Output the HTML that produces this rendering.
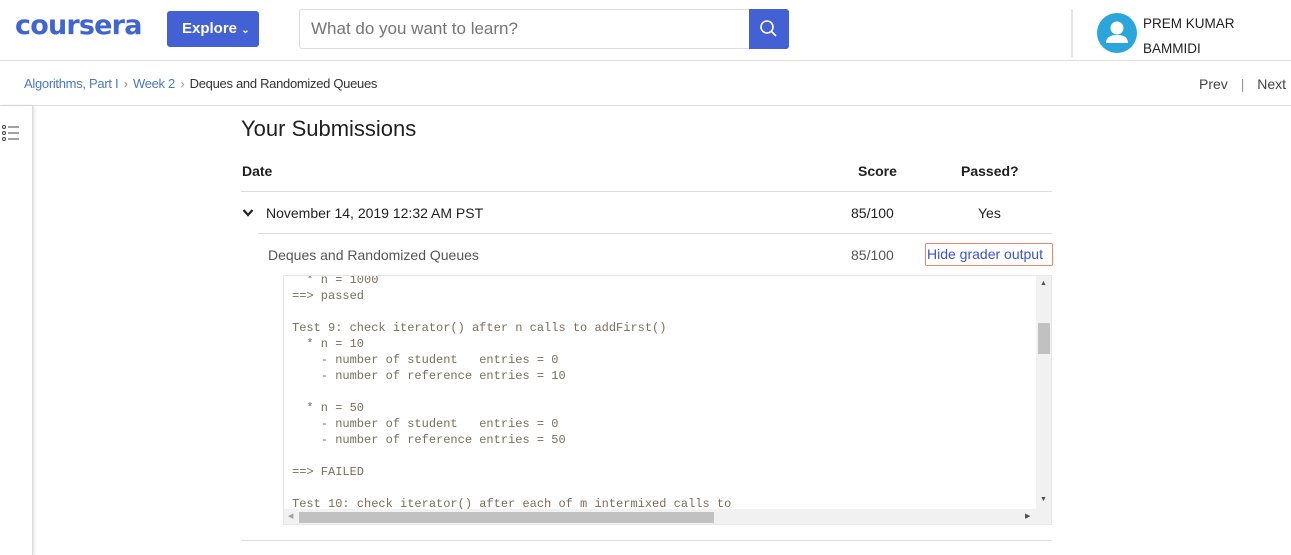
<!DOCTYPE html>
<html><head><meta charset="utf-8"><style>
*{margin:0;padding:0;box-sizing:border-box}
body{width:1291px;height:555px;overflow:hidden;background:#fff;font-family:"Liberation Sans",sans-serif;color:#1f1f1f;position:relative}
.a{position:absolute;white-space:nowrap}
.mono{font-family:"Liberation Mono",monospace;font-size:12px;color:#7a6e62;line-height:16px;white-space:pre}
</style></head><body>
<div class="a" style="left:15px;top:10px;font-size:27px;font-weight:bold;color:#4064d2;letter-spacing:-0.8px;font-family:'DejaVu Sans',sans-serif">coursera</div>
<div class="a" style="left:167px;top:11px;width:92px;height:36px;background:#4360d4;border-radius:3px;color:#fff;font-size:15px;font-weight:bold;line-height:36px;padding-left:15px">Explore <span style="font-size:10px">&#8964;</span></div>
<div class="a" style="left:299px;top:9px;width:451px;height:40px;border:1px solid #dcdcdc;border-radius:3px 0 0 3px;font-size:17px;color:#757575;line-height:38px;padding-left:11px">What do you want to learn?</div>
<div class="a" style="left:749px;top:9px;width:40px;height:40px;background:#4360d4;border-radius:0 3px 3px 0">
<svg width="40" height="40"><circle cx="18" cy="18" r="6" fill="none" stroke="#fff" stroke-width="1.6"/><line x1="22.5" y1="22.5" x2="27" y2="27" stroke="#fff" stroke-width="1.8"/></svg></div>
<div class="a" style="left:1071px;top:9px;width:2px;height:48px;background:#e5e5e5"></div>
<svg class="a" style="left:1097px;top:13px" width="40" height="40"><circle cx="20" cy="20" r="20" fill="#2aa6dc"/><circle cx="20" cy="15" r="6.5" fill="#fff"/><path d="M9 30 Q9 22 20 22 Q31 22 31 30 Z" fill="#fff"/></svg>
<div class="a" style="left:1143px;top:11px;font-size:13.5px;line-height:25px;color:#222">PREM KUMAR<br>BAMMIDI</div>
<div class="a" style="left:0;top:60px;width:1291px;height:1px;background:#e0e0e0"></div>
<div class="a" style="left:24px;top:76px;font-size:13px;color:#4a78c2;letter-spacing:-0.3px">Algorithms, Part I <span style="color:#999;margin:0 2px">&#8250;</span> Week 2 <span style="color:#999;margin:0 2px">&#8250;</span> <span style="color:#333">Deques and Randomized Queues</span></div>
<div class="a" style="left:1199px;top:76px;font-size:14px;color:#444">Prev <span style="color:#999;margin:0 9px">|</span> Next</div>
<div class="a" style="left:0;top:105px;width:1291px;height:1px;background:#e0e0e0"></div>
<div class="a" style="left:0;top:106px;width:33px;height:449px;background:#fff;border-right:1px solid #ddd;box-shadow:1px 0 3px rgba(0,0,0,.15)"></div>
<svg class="a" style="left:1px;top:124px" width="20" height="18"><g fill="none" stroke="#444" stroke-width="1"><circle cx="3" cy="3" r="1.5"/><circle cx="3" cy="9" r="1.5"/><circle cx="3" cy="15" r="1.5"/><line x1="7" y1="3" x2="18" y2="3"/><line x1="7" y1="9" x2="18" y2="9"/><line x1="7" y1="15" x2="18" y2="15"/></g></svg>
<div class="a" style="left:241px;top:116px;font-size:22px;color:#1f1f1f">Your Submissions</div>
<div class="a" style="left:242px;top:163px;font-size:14px;font-weight:bold">Date</div>
<div class="a" style="left:858px;top:163px;font-size:14px;font-weight:bold">Score</div>
<div class="a" style="left:961px;top:163px;font-size:14px;font-weight:bold">Passed?</div>
<div class="a" style="left:241px;top:191px;width:811px;height:1px;background:#ddd"></div>
<svg class="a" style="left:242px;top:208px" width="12" height="10"><path d="M1.5 2 L6 7 L10.5 2" fill="none" stroke="#222" stroke-width="2.2"/></svg>
<div class="a" style="left:266px;top:205px;font-size:14px">November 14, 2019 12:32 AM PST</div>
<div class="a" style="left:851px;top:205px;font-size:14px">85/100</div>
<div class="a" style="left:978px;top:205px;font-size:14px">Yes</div>
<div class="a" style="left:258px;top:233px;width:794px;height:1px;background:#ddd"></div>
<div class="a" style="left:268px;top:247px;font-size:14px;color:#555">Deques and Randomized Queues</div>
<div class="a" style="left:851px;top:247px;font-size:14px;color:#555">85/100</div>
<div class="a" style="left:925px;top:243px;width:128px;height:23px;border:1.5px solid #f2846a;border-radius:2px;font-size:14px;color:#3a52d8;line-height:21px;padding-left:1px">Hide grader output</div>
<div class="a" style="left:283px;top:275px;width:769px;height:250px;border:1px solid #e6e6e6;background:#fff;overflow:hidden">
<div class="mono" style="position:absolute;left:8px;top:-4px">  * n = 1000
==&gt; passed

Test 9: check iterator() after n calls to addFirst()
  * n = 10
    - number of student   entries = 0
    - number of reference entries = 10

  * n = 50
    - number of student   entries = 0
    - number of reference entries = 50

==&gt; FAILED

Test 10: check iterator() after each of m intermixed calls to</div>
<div style="position:absolute;left:752px;top:0;width:16px;height:233px;background:#f1f1f1"></div>
<div style="position:absolute;left:754px;top:47px;width:12px;height:31px;background:#c1c1c1"></div>
<div style="position:absolute;left:756px;top:4px;font-size:7px;color:#505050">&#9650;</div>
<div style="position:absolute;left:756px;top:220px;font-size:7px;color:#505050">&#9660;</div>
<div style="position:absolute;left:0;top:233px;width:768px;height:16px;background:#f1f1f1"></div>
<div style="position:absolute;left:15px;top:236px;width:415px;height:11px;background:#c1c1c1"></div>
<div style="position:absolute;left:4px;top:236px;font-size:7px;color:#a0a0a0">&#9664;</div>
<div style="position:absolute;left:741px;top:236px;font-size:7px;color:#505050">&#9654;</div>
</div>
<div class="a" style="left:241px;top:540px;width:811px;height:1px;background:#ddd"></div>
</body></html>
